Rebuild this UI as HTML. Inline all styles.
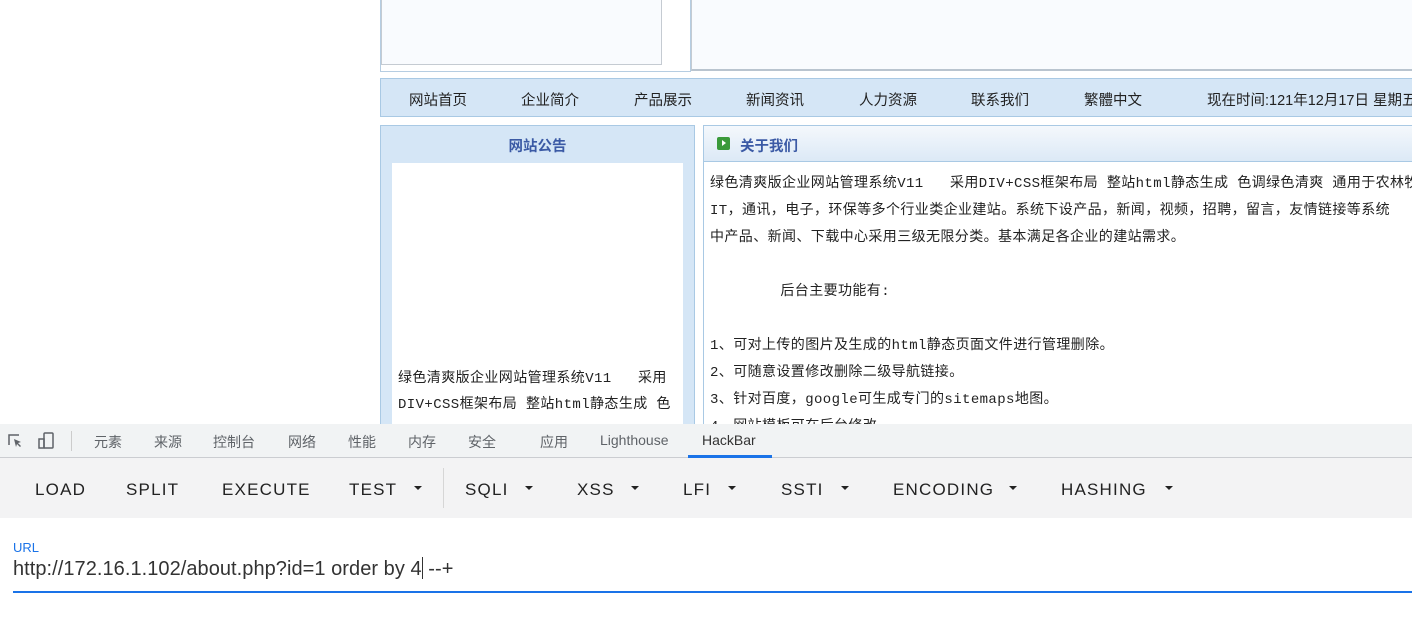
<!DOCTYPE html>
<html><head><meta charset="utf-8">
<style>
*{margin:0;padding:0;box-sizing:border-box}
body{width:1412px;height:623px;overflow:hidden;background:#fff;position:relative;font-family:"Liberation Sans","Noto Sans CJK SC",sans-serif}
.a{position:absolute}
.cn{font-family:"Liberation Mono","Noto Sans CJK SC",monospace;font-size:14px;color:#222;white-space:nowrap;letter-spacing:0.4px}
.nav span{position:absolute;top:10px;font-size:14.5px;color:#222;font-family:"Liberation Sans","Noto Sans CJK SC",sans-serif}
.tab{position:absolute;top:8px;font-size:14px;color:#5f6368;font-family:"Liberation Sans","Noto Sans CJK SC",sans-serif}
.btn{position:absolute;top:22px;font-size:17px;letter-spacing:1.2px;color:#222;font-family:"Liberation Sans",sans-serif}
.car{position:absolute;top:28px;width:0;height:0;border-left:4px solid transparent;border-right:4px solid transparent;border-top:4px solid #222}
</style></head><body>
<div class="a" style="left:380px;top:-2px;width:311px;height:74px;border:1px solid #b6cde2;background:#fff"></div>
<div class="a" style="left:381px;top:-2px;width:281px;height:67px;border:1px solid #c5cbd2;background:#f9fbfe"></div>
<div class="a" style="left:691px;top:-2px;width:725px;height:73px;border:1px solid #c5cbd2;border-bottom:2px solid #b9c4cf;background:#f9fbfe"></div>
<div class="a nav" style="left:380px;top:78px;width:1040px;height:39px;background:#d5e6f6;border:1px solid #a9c9e4">
<span style="left:28px">网站首页</span><span style="left:140px">企业简介</span><span style="left:253px">产品展示</span><span style="left:365px">新闻资讯</span><span style="left:478px">人力资源</span><span style="left:590px">联系我们</span><span style="left:703px">繁體中文</span><span style="left:826px">现在时间:121年12月17日 星期五</span>
</div>
<div class="a" style="left:380px;top:125px;width:315px;height:310px;background:#d5e6f6;border:1px solid #a9c9e4"></div>
<div class="a" style="left:380px;top:135px;width:315px;text-align:center;font-size:14.5px;font-weight:bold;color:#3b5aa5">网站公告</div>
<div class="a" style="left:392px;top:163px;width:291px;height:270px;background:#fff"></div>
<div class="a cn" style="left:398px;top:366px;line-height:26px">绿色清爽版企业网站管理系统V11&nbsp;&nbsp;&nbsp;采用<br>DIV+CSS框架布局 整站html静态生成 色</div>
<div class="a" style="left:703px;top:125px;width:720px;height:310px;background:#fff;border:1px solid #a9c9e4"></div>
<div class="a" style="left:704px;top:126px;width:720px;height:36px;background:linear-gradient(#f4f8fc,#dce9f6);border-bottom:1px solid #a9c9e4"></div>
<div class="a" style="left:717px;top:137px;width:13px;height:13px;border-radius:2px;background:#3a9a3a"><div style="position:absolute;left:5px;top:3px;border-left:4px solid #fff;border-top:3.5px solid transparent;border-bottom:3.5px solid transparent"></div></div>
<div class="a" style="left:740px;top:135px;font-size:14.5px;font-weight:bold;color:#3b5aa5">关于我们</div>
<div class="a cn" style="left:710px;top:171px;line-height:27px;width:702px;overflow:hidden">绿色清爽版企业网站管理系统V11&nbsp;&nbsp;&nbsp;采用DIV+CSS框架布局 整站html静态生成 色调绿色清爽 通用于农林牧<br>IT，通讯，电子，环保等多个行业类企业建站。系统下设产品，新闻，视频，招聘，留言，友情链接等系统<br>中产品、新闻、下载中心采用三级无限分类。基本满足各企业的建站需求。<br><br>&nbsp;&nbsp;&nbsp;&nbsp;&nbsp;&nbsp;&nbsp;&nbsp;后台主要功能有:<br><br>1、可对上传的图片及生成的html静态页面文件进行管理删除。<br>2、可随意设置修改删除二级导航链接。<br>3、针对百度，google可生成专门的sitemaps地图。<br>4、网站模板可在后台修改</div>
<div class="a" style="left:0;top:424px;width:1412px;height:34px;background:#f1f3f4;border-bottom:1px solid #cbcdd1">
<svg class="a" style="left:6px;top:8px" width="18" height="18" viewBox="0 0 18 18"><path d="M3 13V3h10" fill="none" stroke="#5f6368" stroke-width="1.5"/><path d="M8 7l7 3-3 1 3 3-1 1-3-3-1 3z" fill="#5f6368"/></svg>
<svg class="a" style="left:37px;top:7px" width="20" height="20" viewBox="0 0 20 20"><rect x="7" y="2" width="9" height="15" rx="1" fill="none" stroke="#5f6368" stroke-width="1.5"/><rect x="2" y="8" width="5" height="9" fill="none" stroke="#5f6368" stroke-width="1.5"/></svg>
<div class="a" style="left:71px;top:7px;width:1px;height:20px;background:#ccc"></div>
<span class="tab" style="left:94px">元素</span><span class="tab" style="left:154px">来源</span><span class="tab" style="left:213px">控制台</span><span class="tab" style="left:288px">网络</span><span class="tab" style="left:348px">性能</span><span class="tab" style="left:408px">内存</span><span class="tab" style="left:468px">安全</span><span class="tab" style="left:540px">应用</span><span class="tab" style="left:600px">Lighthouse</span><span class="tab" style="left:702px;color:#333">HackBar</span>
<div class="a" style="left:688px;top:31px;width:84px;height:3px;background:#1a73e8"></div>
</div>
<div class="a" style="left:0;top:458px;width:1412px;height:60px;background:#f3f3f4">
<span class="btn" style="left:35px">LOAD</span><span class="btn" style="left:126px">SPLIT</span><span class="btn" style="left:222px">EXECUTE</span><span class="btn" style="left:349px">TEST</span><span class="car" style="left:414px"></span>
<div class="a" style="left:443px;top:10px;width:1px;height:40px;background:#d6d6d6"></div>
<span class="btn" style="left:465px">SQLI</span><span class="car" style="left:525px"></span>
<span class="btn" style="left:577px">XSS</span><span class="car" style="left:631px"></span>
<span class="btn" style="left:683px">LFI</span><span class="car" style="left:728px"></span>
<span class="btn" style="left:781px">SSTI</span><span class="car" style="left:841px"></span>
<span class="btn" style="left:893px">ENCODING</span><span class="car" style="left:1009px"></span>
<span class="btn" style="left:1061px">HASHING</span><span class="car" style="left:1165px"></span>
</div>
<div class="a" style="left:13px;top:540px;font-size:13px;color:#1a73e8">URL</div>
<div class="a" style="left:13px;top:557px;font-size:20px;letter-spacing:0.05px;color:#333">http://172.16.1.102/about.php?id=1 order by 4<span style="display:inline-block;width:1px;height:22px;background:#333;vertical-align:-4px"></span> --+</div>
<div class="a" style="left:13px;top:591px;width:1399px;height:2px;background:#1a73e8"></div>
</body></html>
